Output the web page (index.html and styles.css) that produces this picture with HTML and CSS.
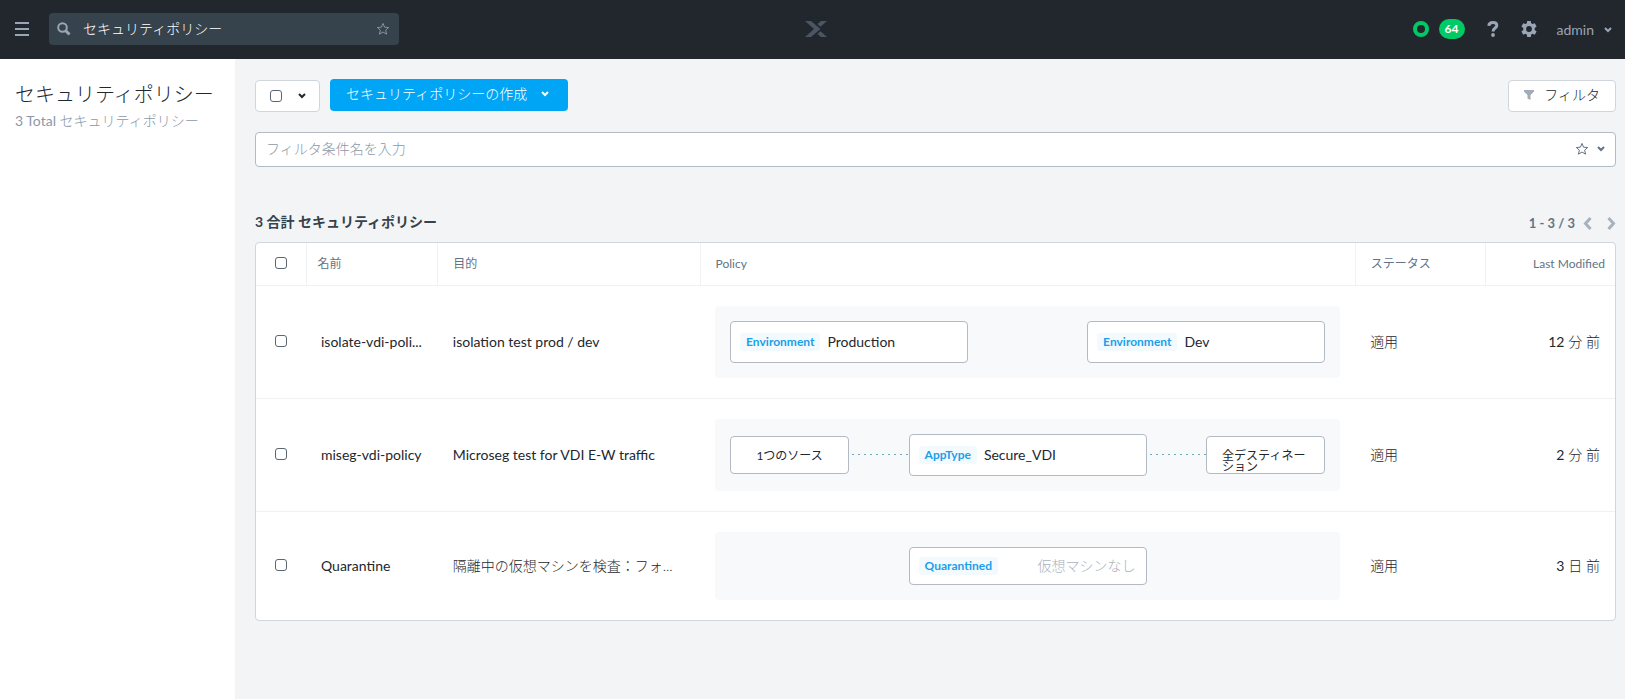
FILE: index.html
```html
<!DOCTYPE html>
<html lang="ja">
<head>
<meta charset="utf-8">
<meta name="viewport" content="width=device-width, initial-scale=1">
<title>セキュリティポリシー</title>
<link rel="stylesheet" href="styles.css">
</head>
<body>
<header class="topbar">
  <button class="icon-button menu" aria-label="メニュー">
    <svg width="14" height="14" viewBox="0 0 14 14" fill="currentColor"><path d="M0 0h14v2H0zM0 6h14v2H0zM0 12h14v2H0z"/></svg>
  </button>
  <div class="search">
    <svg class="search-icon" width="14" height="14" viewBox="0 0 14 14" fill="none" stroke="currentColor" stroke-width="2"><circle cx="5.500" cy="5.500" r="4.300"/><path d="M8.500 8.500l4 4" stroke-width="3"/></svg>
    <input class="search-input" type="text" aria-label="検索" value="セキュリティポリシー">
    <button class="icon-button star" aria-label="お気に入り">
      <svg width="14" height="14" viewBox="0 0 14 14" fill="none" stroke="currentColor"><path d="M7 1.400l1.600 3.800 4.100.3-3.100 2.700 1 4L7 10l-3.600 2.200 1-4L1.300 5.500l4.100-.3z"/></svg>
    </button>
  </div>
  <div class="brand">
    <svg width="24" height="16" viewBox="0 0 24 16" fill="currentColor"><path d="M1 0h6l9.500 8L7 16H1l9-8zM17 0h6l-6.500 5.700-3-2.600zM16.500 10.300L23 16h-6l-3.500-3.100z"/></svg>
  </div>
  <div class="tools">
    <span class="health" role="img" aria-label="正常"></span>
    <span class="badge">64</span>
    <button class="icon-button help" aria-label="ヘルプ">
      <svg width="12" height="16" viewBox="0 0 12 16" fill="none" stroke="currentColor" stroke-width="3"><path d="M1.800 4.800C2 2.700 3.600 1.600 5.900 1.600c2.400 0 3.900 1.100 3.900 2.900 0 2.600-3.700 2.500-3.700 5.900"/><circle cx="6" cy="14" r="1.900" fill="currentColor" stroke="none"/></svg>
    </button>
    <button class="icon-button gear" aria-label="設定">
      <svg width="16" height="16" viewBox="0 0 16 16"><path fill="currentColor" fill-rule="evenodd" d="M6.200 0h3.600l.4 2.300 1.300.8 2.300-.8 1.800 3.100-1.900 1.600v1.900l1.900 1.600-1.800 3.200-2.300-.9-1.300.8-.4 2.400H6.200l-.4-2.400-1.300-.8-2.300.9L.4 10.500l1.900-1.600V7L.4 5.400l1.800-3.100 2.300.8 1.300-.8zM8 5.100a2.900 2.900 0 100 5.800 2.900 2.900 0 000-5.800z"/></svg>
    </button>
    <button class="icon-button user">admin
      <svg class="chevron" width="8" height="6" viewBox="0 0 8 6"><path d="M1 1l3 3 3-3"/></svg>
    </button>
  </div>
</header>
<div class="layout">
  <aside class="sidebar">
    <h1 class="sidebar-title">セキュリティポリシー</h1>
    <p class="sidebar-count">3 Total <span class="light">セキュリティポリシー</span></p>
  </aside>
  <main class="content">
    <div class="toolbar">
      <div class="select-all">
        <input class="check" type="checkbox" aria-label="すべて選択">
        <button class="icon-button" aria-label="選択オプション"><svg class="chevron" width="8" height="6" viewBox="0 0 8 6"><path d="M1 1l3 3 3-3"/></svg></button>
      </div>
      <button class="create">セキュリティポリシーの作成
        <svg class="chevron" width="8" height="6" viewBox="0 0 8 6"><path d="M1 1l3 3 3-3"/></svg>
      </button>
      <button class="filter-button">
        <svg width="12" height="10" viewBox="0 0 12 10" fill="#a3abb5"><path d="M1 0h10v1.500L7.500 5v5L4.500 8.500V5L1 1.500z"/></svg>フィルタ
      </button>
    </div>
    <div class="filter-bar">
      <input class="filter-input" type="text" aria-label="フィルタ条件" placeholder="フィルタ条件名を入力">
      <button class="icon-button" aria-label="フィルタを保存">
        <svg width="14" height="14" viewBox="0 0 14 14" fill="none" stroke="currentColor"><path d="M7 1.400l1.600 3.800 4.100.3-3.100 2.700 1 4L7 10l-3.600 2.200 1-4L1.300 5.500l4.100-.3z"/></svg>
      </button>
      <button class="icon-button" aria-label="保存済みフィルタ"><svg class="chevron" width="8" height="6" viewBox="0 0 8 6"><path d="M1 1l3 3 3-3"/></svg></button>
    </div>
    <div class="list-head">
      <h2 class="list-title">3 合計 セキュリティポリシー</h2>
      <nav class="pager" aria-label="ページ">
        <span>1 - 3 / 3</span>
        <button class="icon-button" aria-label="前へ"><svg width="9" height="13" viewBox="0 0 9 13" fill="none" stroke="currentColor" stroke-width="3"><path d="M7.500 1L2.500 6.500l5 5.500"/></svg></button>
        <button class="icon-button next" aria-label="次へ"><svg width="9" height="13" viewBox="0 0 9 13" fill="none" stroke="currentColor" stroke-width="3"><path d="M1.500 1l5 5.500-5 5.500"/></svg></button>
      </nav>
    </div>
    <div class="card">
      <table class="policies">
        <colgroup><col class="col-check"><col class="col-name"><col class="col-purpose"><col class="col-policy"><col class="col-status"><col></colgroup>
        <thead>
          <tr>
            <th class="cell-check"><input class="check" type="checkbox" aria-label="すべて選択"></th>
            <th class="cell-name">名前</th><th>目的</th><th>Policy</th><th>ステータス</th><th class="cell-time">Last Modified</th>
          </tr>
        </thead>
        <tbody>
          <tr>
            <td class="cell-check"><input class="check" type="checkbox" aria-label="isolate-vdi-policy"></td>
            <td>isolate-vdi-poli...</td>
            <td>isolation test prod / dev</td>
            <td>
              <div class="diagram pair">
                <div class="node"><span class="tag">Environment</span>Production</div>
                <div class="node"><span class="tag">Environment</span>Dev</div>
              </div>
            </td>
            <td class="cell-status">適用</td>
            <td class="cell-time"><b>12</b> 分 前</td>
          </tr>
          <tr>
            <td class="cell-check"><input class="check" type="checkbox" aria-label="miseg-vdi-policy"></td>
            <td>miseg-vdi-policy</td>
            <td>Microseg test for VDI E-W traffic</td>
            <td>
              <div class="diagram">
                <div class="endpoint"><span>1つのソース</span></div>
                <div class="link"></div>
                <div class="node"><span class="tag">AppType</span>Secure_VDI</div>
                <div class="link"></div>
                <div class="endpoint"><span>全デスティネーション</span></div>
              </div>
            </td>
            <td class="cell-status">適用</td>
            <td class="cell-time"><b>2</b> 分 前</td>
          </tr>
          <tr>
            <td class="cell-check"><input class="check" type="checkbox" aria-label="Quarantine"></td>
            <td>Quarantine</td>
            <td class="light">隔離中の仮想マシンを検査：フォ...</td>
            <td>
              <div class="diagram">
                <div class="node solo"><span class="tag">Quarantined</span><span class="empty">仮想マシンなし</span></div>
              </div>
            </td>
            <td class="cell-status">適用</td>
            <td class="cell-time"><b>3</b> 日 前</td>
          </tr>
        </tbody>
      </table>
    </div>
  </main>
</div>
</body>
</html>
```
FILE: styles.css
```css
* {
  box-sizing: border-box;
}

body {
  margin: 0;
  min-height: 100vh;
  display: flex;
  flex-direction: column;
  background: #f2f4f6;
  color: #22272e;
  font: 14px/20px Lato, "Noto Sans CJK JP", sans-serif;
}

button,
input {
  font: inherit;
  color: inherit;
  outline: 0;
}

svg {
  display: block;
  flex: none;
}

h1,
h2,
p {
  margin: 0;
}

.light {
  font-weight: 300;
}

.icon-button {
  display: flex;
  align-items: center;
  padding: 0;
  border: 0;
  background: none;
  cursor: pointer;
}

.chevron {
  fill: none;
  stroke: currentColor;
  stroke-width: 2;
}

.check {
  appearance: none;
  display: block;
  width: 12px;
  height: 12px;
  margin: 0;
  border: 1px solid #5b6675;
  border-radius: 3px;
  background: #fff;
}

/* Top bar */
.topbar {
  display: grid;
  grid-template-columns: 1fr auto 1fr;
  align-items: center;
  grid-template-areas: "left brand right";
  height: 59px;
  padding: 0 13px 2px 15px;
  background: #22272e;
  color: #9aa5b5;
}

.menu {
  grid-area: left;
}

.search {
  grid-area: left;
  display: flex;
  align-items: center;
  width: 350px;
  height: 32px;
  margin-left: 34px;
  padding: 0 9px 0 8px;
  border-radius: 4px;
  background: #36424c;
}

.search-input {
  flex: 1;
  min-width: 0;
  padding: 0 12px;
  border: 0;
  background: none;
  color: #fff;
  font-weight: 300;
}

.star {
  color: #8592a0;
}

.brand {
  grid-area: brand;
  padding-left: 4px;
  color: #4c5662;
}

.tools {
  grid-area: right;
  display: flex;
  align-items: center;
  justify-content: flex-end;
}

.health {
  width: 16px;
  height: 16px;
  border: 4px solid #00ca66;
  border-radius: 50%;
}

.badge {
  margin-left: 10px;
  padding: 0 6px;
  border-radius: 10px;
  background: #00ca66;
  color: #fff;
  font-size: 12px;
  font-weight: 700;
}

.help {
  margin-left: 22px;
}

.gear {
  margin-left: 22px;
}

.user {
  gap: 10px;
  margin-left: 20px;
  padding-top: 2px;
}

/* Page body */
.layout {
  flex: 1;
  display: flex;
}

.sidebar {
  flex: none;
  width: 235px;
  padding: 20px 15px;
  background: #fff;
}

.sidebar-title {
  font-size: 20px;
  font-weight: 300;
  line-height: 30px;
  white-space: nowrap;
  color: #22272e;
}

.sidebar-count {
  line-height: 24px;
  white-space: nowrap;
  color: #8c98a8;
}

.content {
  flex: 1;
  min-width: 0;
  padding: 20px 9px 20px 20px;
}

.toolbar {
  display: flex;
  gap: 10px;
}

.select-all,
.filter-button {
  display: flex;
  align-items: center;
  height: 32px;
  margin-top: 1px;
  padding: 0 15px;
  border: 1px solid #d1d6dc;
  border-radius: 4px;
  background: #fff;
}

.select-all {
  gap: 16px;
  padding: 0 13px 0 14px;
}

.create {
  display: flex;
  align-items: center;
  gap: 14px;
  height: 32px;
  padding: 0 19px 2px 16px;
  border: 0;
  border-radius: 4px;
  background: #00a5f5;
  color: #fff;
  font-weight: 300;
}

.filter-button {
  gap: 9px;
  margin-left: auto;
  padding: 0 15px 2px 14px;
  font-weight: 300;
}

.filter-bar {
  display: flex;
  align-items: center;
  gap: 8px;
  height: 35px;
  margin-top: 20px;
  padding: 0 10px 2px;
  border: 1px solid #b3bac3;
  border-radius: 4px;
  background: #fff;
  color: #627386;
}

.filter-input {
  flex: 1;
  min-width: 0;
  padding: 0;
  border: 0;
  background: none;
  font-weight: 300;
}

.filter-input::placeholder {
  color: #8c98a8;
  opacity: 1;
}

.list-head {
  display: flex;
  align-items: center;
  justify-content: space-between;
  margin-top: 44px;
}

.list-title {
  font-size: 14px;
  color: #36424c;
}

.pager {
  display: flex;
  align-items: center;
  gap: 8px;
  padding-top: 2px;
  font-size: 13px;
  font-weight: 700;
  color: #627386;
}

.pager .icon-button {
  color: #a8b1bc;
}

.pager .next {
  margin-left: 7px;
}

/* Policy table */
.card {
  margin-top: 9px;
  border: 1px solid #d1d6dc;
  border-radius: 4px;
  background: #fff;
  overflow: hidden;
}

.policies {
  width: 100%;
  table-layout: fixed;
  border-collapse: collapse;
}

.col-check {
  width: 50px;
}

.col-name {
  width: 9.7%;
}

.col-status {
  width: 9.6%;
}

.col-purpose {
  width: 19.3%;
}

.col-policy {
  width: 48.2%;
}

.policies th,
.policies td {
  padding: 0 15px;
  text-align: left;
  white-space: nowrap;
}

.policies th {
  height: 42px;
  border-left: 1px solid #eff1f3;
  font-size: 12px;
  font-weight: 400;
  color: #627386;
}

.policies .cell-check {
  padding: 0 19px 2px;
  border-left: 0;
}

.policies th.cell-name {
  padding-left: 11px;
}

.policies tbody tr {
  border-top: 1px solid #eff1f3;
}

.policies tbody td:nth-child(4) {
  padding: 20px 15px;
}

.policies td.cell-status,
.policies td.cell-time {
  font-weight: 300;
}

.policies .cell-time {
  text-align: right;
}

.policies th.cell-time {
  padding-right: 10px;
}

.diagram {
  display: grid;
  grid-template-columns: 2fr 1fr 4fr 1fr 2fr;
  align-items: center;
  padding: 15px;
  border-radius: 4px;
  background: #f8f9fb;
}

.pair {
  grid-template-columns: 4fr 4fr;
  column-gap: 20%;
}

.node {
  display: flex;
  align-items: center;
  gap: 7px;
  height: 42px;
  padding: 0 10px 0 9px;
  border: 1px solid #b3bac3;
  border-radius: 4px;
  background: #fff;
}

.solo {
  grid-column: 3;
  height: 38px;
}

.tag {
  padding: 0 6px;
  border-radius: 3px;
  background: #f3fafe;
  color: #1b9fea;
  font-size: 12px;
  font-weight: 700;
  line-height: 18px;
}

.empty {
  margin-left: auto;
  color: #a9b1bd;
  font-weight: 300;
}

.endpoint {
  display: flex;
  justify-content: center;
  height: 38px;
  padding: 13px 15px 0;
  border: 1px solid #b3bac3;
  border-radius: 4px;
  background: #fff;
  color: #22272e;
  font-size: 12px;
  line-height: 11px;
  white-space: normal;
}

.link {
  height: 1px;
  margin-left: 3px;
  background: repeating-linear-gradient(90deg, #6fa9bd 0 2px, transparent 2px 6px);
}
```
